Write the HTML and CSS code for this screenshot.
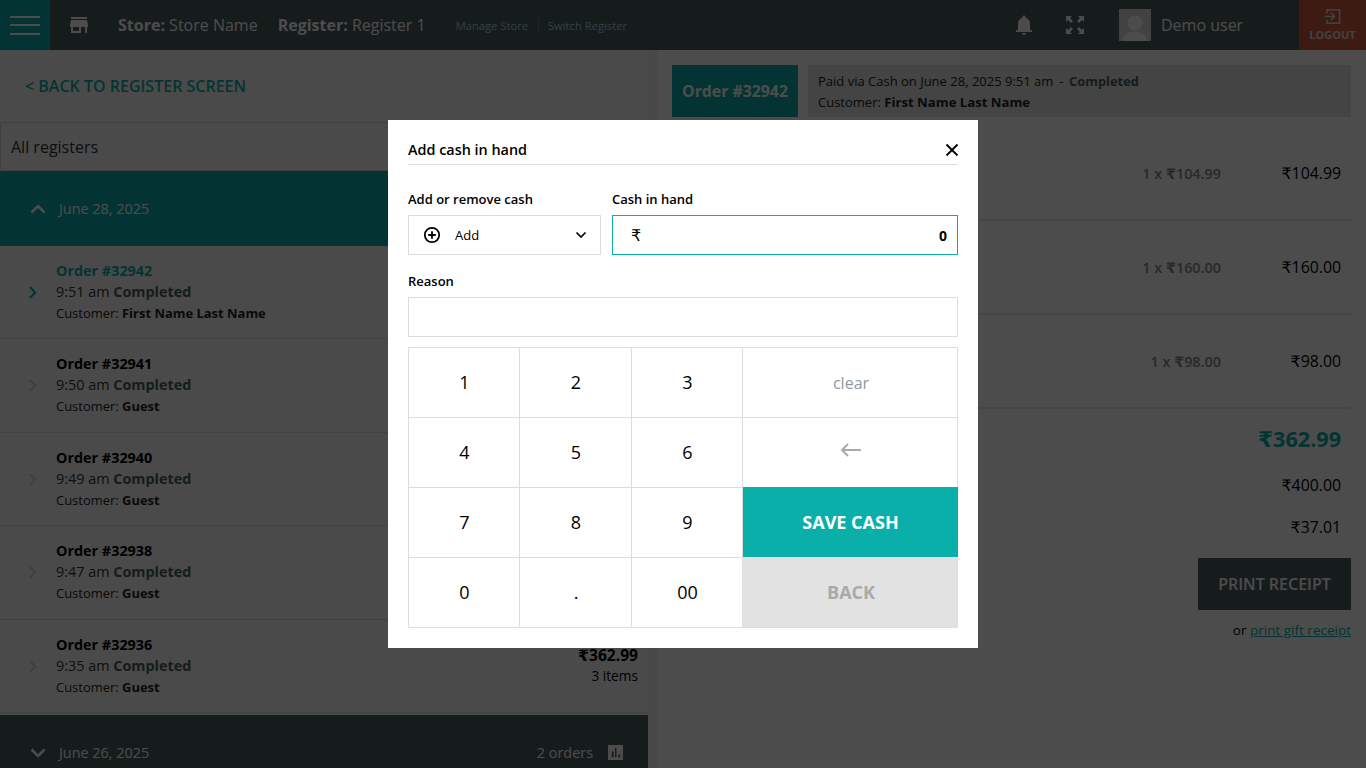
FILE: index.html
```html
<!DOCTYPE html>
<html lang="en">
<head>
<meta charset="utf-8">
<title>Add cash in hand</title>
<link rel="stylesheet" href="styles.css">
</head>
<body>
<header class="topbar">
  <button class="menu-btn" aria-label="Menu"><span></span><span></span><span></span></button>
  <svg class="store-icon" viewBox="0 0 24 24"><path d="M20 4H4v2h16V4zm1 10v-2l-1-5H4l-1 5v2h1v6h10v-6h4v6h2v-6h1zm-9 4H6v-4h6v4z"/></svg>
  <div class="store-line"><b>Store:</b> Store Name</div>
  <div class="store-line reg"><b>Register:</b> Register 1</div>
  <nav class="top-links"><a>Manage Store</a><a>Switch Register</a></nav>
  <div class="top-right">
    <svg class="bell" viewBox="0 0 24 24"><path d="M12 22c1.100 0 2-.9 2-2h-4c0 1.100.9 2 2 2zm6-6v-5c0-3.100-1.600-5.600-4.500-6.300V4c0-.8-.7-1.500-1.500-1.500s-1.500.7-1.500 1.500v.7C7.600 5.400 6 7.900 6 11v5l-2 2v1h16v-1l-2-2z"/></svg>
    <svg class="expand" viewBox="0 0 20 20"><path d="M1 1h6L5 3l3 3-2 2-3-3-2 2zM19 1v6l-2-2-3 3-2-2 3-3-2-2zM1 19v-6l2 2 3-3 2 2-3 3 2 2zM19 19h-6l2-2-3-3 2-2 3 3 2-2z"/></svg>
    <div class="avatar"><svg viewBox="0 0 32 32"><circle cx="16" cy="14" r="7.500"/><path d="M4 32c0-7 5-9.500 12-9.500S28 25 28 32z"/></svg></div>
    <div class="user">Demo user</div>
    <button class="logout">
      <svg viewBox="0 0 24 24"><path d="M5 8V3.500h16v17H5V16M2 12h12M10 7.500l4.500 4.500-4.500 4.500" fill="none" stroke="currentColor" stroke-width="2"/></svg>
      <span>LOGOUT</span>
    </button>
  </div>
</header>

<main class="page">
  <section class="left">
    <a class="back">&lt; BACK TO REGISTER SCREEN</a>
    <div class="reg-select">All registers</div>
    <div class="day open">
      <svg class="chev" viewBox="0 0 16 10"><path d="M1.500 8.500L8 2l6.500 6.500"/></svg>
      <span>June 28, 2025</span>
    </div>
    <article class="order active">
      <svg class="arrow" viewBox="0 0 8 12"><path d="M1.500 1l5 5-5 5"/></svg>
      <div class="order-body">
        <div class="num">Order #32942</div>
        <div class="time">9:51 am <b>Completed</b></div>
        <div class="cust">Customer: <b>First Name Last Name</b></div>
      </div>
    </article>
    <article class="order tall">
      <svg class="arrow" viewBox="0 0 8 12"><path d="M1.500 1l5 5-5 5"/></svg>
      <div class="order-body">
        <div class="num">Order #32941</div>
        <div class="time">9:50 am <b>Completed</b></div>
        <div class="cust">Customer: <b>Guest</b></div>
      </div>
    </article>
    <article class="order">
      <svg class="arrow" viewBox="0 0 8 12"><path d="M1.500 1l5 5-5 5"/></svg>
      <div class="order-body">
        <div class="num">Order #32940</div>
        <div class="time">9:49 am <b>Completed</b></div>
        <div class="cust">Customer: <b>Guest</b></div>
      </div>
    </article>
    <article class="order tall">
      <svg class="arrow" viewBox="0 0 8 12"><path d="M1.500 1l5 5-5 5"/></svg>
      <div class="order-body">
        <div class="num">Order #32938</div>
        <div class="time">9:47 am <b>Completed</b></div>
        <div class="cust">Customer: <b>Guest</b></div>
      </div>
    </article>
    <article class="order">
      <svg class="arrow" viewBox="0 0 8 12"><path d="M1.500 1l5 5-5 5"/></svg>
      <div class="order-body">
        <div class="num">Order #32936</div>
        <div class="time">9:35 am <b>Completed</b></div>
        <div class="cust">Customer: <b>Guest</b></div>
      </div>
      <div class="order-sum"><b>₹362.99</b><span>3 items</span></div>
    </article>
    <div class="day closed">
      <svg class="chev" viewBox="0 0 16 10"><path d="M1.500 1.500L8 8l6.500-6.500"/></svg>
      <span>June 26, 2025</span>
      <span class="count">2 orders</span>
      <svg class="stats" viewBox="0 0 16 16"><path d="M0 0h16v16H0zM4 7v6h2V7zM7.500 3v10h1.500V3zM11 10v3h2v-3z" fill-rule="evenodd"/></svg>
    </div>
  </section>

  <section class="right">
    <div class="summary">
      <div class="badge">Order #32942</div>
      <div class="info">
        <div>Paid via Cash on June 28, 2025 9:51 am<span class="dash">-</span><b class="status">Completed</b></div>
        <div class="info-cust">Customer: <b>First Name Last Name</b></div>
      </div>
    </div>
    <div class="items">
      <div class="item"><span class="qty">1 x ₹104.99</span><span class="price">₹104.99</span></div>
      <div class="item"><span class="qty">1 x ₹160.00</span><span class="price">₹160.00</span></div>
      <div class="item"><span class="qty">1 x ₹98.00</span><span class="price">₹98.00</span></div>
    </div>
    <div class="total grand">₹362.99</div>
    <div class="total paid">₹400.00</div>
    <div class="total change">₹37.01</div>
    <button class="print">PRINT RECEIPT</button>
    <div class="gift">or <a>print gift receipt</a></div>
  </section>
</main>

<div class="overlay"></div>

<div class="modal" role="dialog">
  <div class="modal-head">
    <span>Add cash in hand</span>
    <svg class="close" viewBox="0 0 14 14"><path d="M1.500 1.500l11 11M12.500 1.500l-11 11"/></svg>
  </div>
  <div class="cash-row">
    <div class="field">
      <label>Add or remove cash</label>
      <div class="box select">
        <svg class="plus" viewBox="0 0 18 18"><circle cx="9" cy="9" r="7.200"/><path d="M9 5.200v7.600M5.200 9h7.600"/></svg>
        <span>Add</span>
        <svg class="drop" viewBox="0 0 12 8"><path d="M1.500 1.500L6 6l4.500-4.500"/></svg>
      </div>
    </div>
    <div class="field grow">
      <label>Cash in hand</label>
      <div class="box amount"><span class="rupee">₹</span><b>0</b></div>
    </div>
  </div>
  <div class="field reason">
    <label>Reason</label>
    <div class="box"></div>
  </div>
  <div class="keypad">
    <button class="key digit">1</button><button class="key digit">2</button><button class="key digit">3</button><button class="key fn clear">clear</button>
    <button class="key digit">4</button><button class="key digit">5</button><button class="key digit">6</button>
    <button class="key fn clear" aria-label="Backspace"><svg class="bksp" viewBox="0 0 22 14"><path d="M21 7H2M8 1L2 7l6 6"/></svg></button>
    <button class="key digit">7</button><button class="key digit">8</button><button class="key digit">9</button><button class="key save">SAVE CASH</button>
    <button class="key digit">0</button><button class="key digit">.</button><button class="key digit">00</button><button class="key cancel">BACK</button>
  </div>
</div>
</body>
</html>
```
FILE: styles.css
```css
* { box-sizing: border-box; }
html, body { height: 100%; }
body {
  margin: 0;
  height: 768px;
  overflow: hidden;
  background: #fff;
  color: #000;
  font-family: "Open Sans", "DejaVu Sans", sans-serif;
  font-size: 14px;
}
button { font-family: inherit; border: 0; padding: 0; }

/* Top bar */
.topbar {
  height: 50px;
  background: #4b5e60;
  display: flex;
  align-items: center;
  color: #fff;
}
.menu-btn {
  width: 50px;
  height: 50px;
  background: #0aafaa;
  display: flex;
  flex-direction: column;
  justify-content: center;
  align-items: center;
  gap: 6.500px;
  flex: none;
}
.menu-btn span { width: 30px; height: 2px; background: #fff; display: block; }
.store-icon { width: 24px; height: 24px; margin-left: 17px; fill: #fff; flex: none; }
.store-line { font-size: 16px; margin-left: 27px; white-space: nowrap; }
.store-line.reg { margin-left: 20px; }
.top-links { margin-left: 30px; display: flex; font-size: 11.200px; color: #a0dcdc; }
.top-links a { padding-right: 10px; line-height: 17px; margin-top: 1px; }
.top-links a + a { padding-left: 9px; border-left: 1px solid #5f7f80; }
.top-right { margin-left: auto; display: flex; align-items: center; height: 50px; }
.bell { width: 24px; height: 24px; fill: #fff; margin-right: 2px; }
.expand { width: 20px; height: 20px; margin-left: 27px; fill: #fff; }
.avatar { width: 32px; height: 32px; margin-left: 34px; background: #ddd; overflow: hidden; }
.avatar svg { display: block; width: 32px; height: 32px; fill: #fff; }
.user { font-size: 16px; margin-left: 10px; width: 138px; }
.logout {
  width: 67px;
  height: 50px;
  background: #cf5d3c;
  color: #ddd;
  display: flex;
  flex-direction: column;
  align-items: center;
  justify-content: flex-start;
  font-size: 11px;
  font-weight: 700;
  line-height: 14px;
  padding-top: 7px;
}
.logout svg { width: 19px; height: 19px; display: block; margin-bottom: 2px; }

/* Page */
.page { display: flex; height: 718px; background: #fff; }
.left { width: 648px; flex: none; display: flex; flex-direction: column; background: #f8f8f8; }
.back {
  height: 72px;
  padding: 25px 0 0 25px;
  color: #0aafaa;
  font-size: 16px;
  font-weight: 600;
  line-height: 22px;
}
.reg-select {
  height: 49px;
  flex: none;
  border: 1px solid #d8d8d8;
  border-right: 0;
  padding: 13px 10px 0;
  font-size: 16px;
  line-height: 22px;
  color: #333;
}
.day {
  display: flex;
  align-items: center;
  color: #fff;
  flex: none;
  padding-left: 30px;
  font-size: 14.400px;
}
.day.open { height: 75px; background: #0aafaa; }
.day.closed { height: 53px; background: #4b5e60; margin-top: 2px; padding-right: 25px; padding-top: 28px; align-items: flex-start; }
.chev { width: 16px; height: 10px; fill: none; stroke: #fff; stroke-width: 2.500; margin-right: 13px; }
.day.closed .chev { margin-top: 5px; }
.count { margin-left: auto; margin-right: 15px; }
.stats { width: 15px; height: 15px; fill: #fff; margin-top: 2px; }

.order {
  height: 93px;
  flex: none;
  display: flex;
  align-items: center;
  border-bottom: 1px solid #ddd;
  padding: 0 10px 0 28px;
}
.order.tall { height: 94px; }
.arrow { width: 9px; height: 13px; fill: none; stroke: #d5d5d5; stroke-width: 2; flex: none; }
.active .arrow { stroke: #0aafaa; }
.order-body { margin-left: 19px; flex: 1; align-self: flex-start; padding-top: 14px; }
.num { font-weight: 700; font-size: 14.400px; line-height: 21px; }
.active .num { color: #0aafaa; }
.time { font-size: 14.400px; line-height: 21px; color: #333; }
.time b { color: #4b5e60; }
.cust { font-size: 12.960px; line-height: 21px; color: #222; margin-top: 1px; }
.order-sum { display: flex; flex-direction: column; align-items: flex-end; font-size: 13.700px; line-height: 21px; margin-top: -1px; }
.order-sum b { font-size: 15.600px; color: #000; }
.order-sum span { margin-top: -1px; }

.right { flex: 1; padding: 15px 15px 0 15px; border-left: 9px solid #f0f0f0; display: flex; flex-direction: column; align-items: stretch; }
.summary { display: flex; gap: 10px; height: 52px; flex: none; }
.badge {
  width: 126px;
  background: #0aafaa;
  color: #fff;
  font-weight: 700;
  font-size: 15.840px;
  display: flex;
  align-items: center;
  justify-content: center;
}
.info { flex: 1; background: #e3e3e3; padding: 6px 10px; font-size: 13px; line-height: 21px; color: #222; }
.info-cust b { font-size: 13.150px; }
.dash { margin: 0 5.500px 0 6px; }
.status { color: #4b5e60; font-size: 12.900px; }
.items { margin-top: 10px; flex: none; }
.item {
  height: 94px;
  display: flex;
  justify-content: flex-end;
  align-items: center;
  border-bottom: 2px solid #e8e8e8;
  padding-right: 10px;
}
.qty { font-weight: 600; font-size: 14.400px; color: #8a8a8a; margin-right: 60px; }
.price { font-weight: 500; font-size: 15.840px; text-align: right; width: 60px; }
.total { text-align: right; padding-right: 10px; font-weight: 500; font-size: 15.840px; flex: none; }
.total.grand { font-size: 21.600px; font-weight: 700; color: #0aafaa; margin-top: 15px; line-height: 30px; }
.total.paid { margin-top: 20px; line-height: 22px; }
.total.change { margin-top: 20px; line-height: 22px; }
.print {
  align-self: flex-end;
  width: 153px;
  height: 52px;
  background: #4b5e60;
  color: #fff;
  font-size: 16px;
  font-weight: 600;
  margin-top: 20px;
  flex: none;
}
.gift { align-self: flex-end; margin-top: 11px; font-size: 13.500px; line-height: 19px; }
.gift a { color: #0aafaa; text-decoration: underline; }

/* Overlay + modal */
.overlay { position: fixed; inset: 0; background: rgba(0, 0, 0, .7); }
.modal {
  position: fixed;
  left: 388px;
  top: 120px;
  width: 590px;
  height: 528px;
  background: #fff;
  padding: 20px;
}
.modal-head {
  height: 25px;
  border-bottom: 1px solid #ddd;
  display: flex;
  justify-content: space-between;
  align-items: center;
  font-size: 14.400px;
  font-weight: 600;
  padding-bottom: 5px;
}
.close { width: 14px; height: 14px; fill: none; stroke: #000; stroke-width: 1.800; margin-right: -1px; }
.cash-row { display: flex; gap: 11px; margin-top: 24px; }
.field { display: flex; flex-direction: column; }
.field label { font-size: 13px; font-weight: 600; line-height: 20px; height: 26px; }
.grow { flex: 1; }
.box { height: 40px; border: 1px solid #ddd; background: #fff; display: flex; align-items: center; }
.select { width: 193px; padding: 0 13px 0 14px; font-size: 13px; }
.plus { width: 18px; height: 18px; fill: none; stroke: #000; stroke-width: 1.800; margin-right: 14px; flex: none; }
.drop { width: 12px; height: 8px; margin-left: auto; fill: none; stroke: #000; stroke-width: 1.700; }
.amount { border-color: #0aafaa; padding: 0 10px 0 18px; justify-content: space-between; }
.rupee { font-size: 16px; }
.amount b { font-size: 14px; }
.reason { margin-top: 16px; }
.keypad {
  margin-top: 10px;
  display: grid;
  grid-template-columns: 111px 112px 111px 215px;
  grid-auto-rows: 70px;
  border-top: 1px solid #ddd;
  border-left: 1px solid #ddd;
  height: 281px;
}
.key {
  background: #fff;
  border-right: 1px solid #ddd;
  border-bottom: 1px solid #ddd;
  font-size: 18px;
  color: #000;
  display: flex;
  align-items: center;
  justify-content: center;
}
.digit { padding: 0 0 2px 1px; }
.fn { color: #8f98a3; font-size: 16px; }
.clear { padding-left: 2px; }
.bksp { width: 22px; height: 14px; fill: none; stroke: #aaa; stroke-width: 2; margin-bottom: 6px; }
.save { background: #0aafaa; color: #fff; font-weight: 700; border: 0; margin-top: -1px; padding-bottom: 1px; }
.cancel { background: #e2e2e2; color: #a9a9a9; font-weight: 700; margin-top: -1px; padding: 0 0 1px 2px; }
```
